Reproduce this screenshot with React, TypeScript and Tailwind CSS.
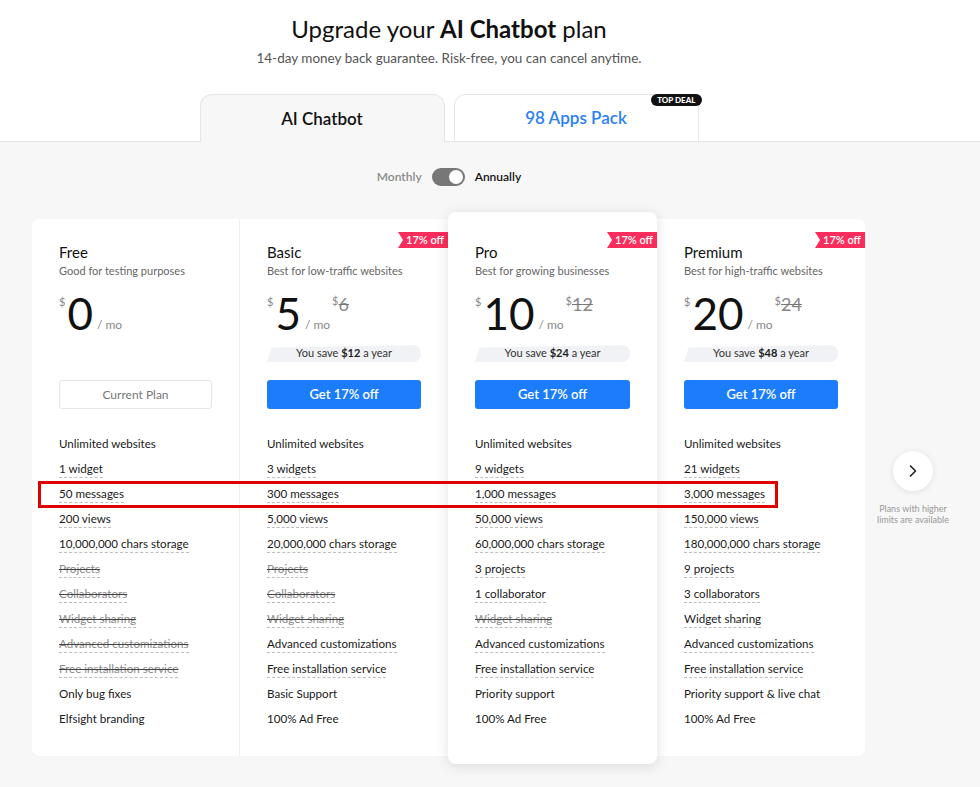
import { ChevronRight } from 'lucide-react'

// ── Data ──────────────────────────────────────────────────────────────────────

type Feature = { t: string; u?: boolean; x?: boolean }

interface Plan {
  name: string
  desc: string
  price: string
  old?: string
  save?: string
  current?: boolean
  features: Feature[]
}

const f = (t: string): Feature => ({ t })
const u = (t: string): Feature => ({ t, u: true })
const x = (t: string): Feature => ({ t, u: true, x: true })

const plans: Plan[] = [
  {
    name: 'Free',
    desc: 'Good for testing purposes',
    price: '0',
    current: true,
    features: [
      f('Unlimited websites'), u('1 widget'), u('50 messages'), u('200 views'),
      u('10,000,000 chars storage'), x('Projects'), x('Collaborators'), x('Widget sharing'),
      x('Advanced customizations'), x('Free installation service'), f('Only bug fixes'), f('Elfsight branding'),
    ],
  },
  {
    name: 'Basic',
    desc: 'Best for low-traffic websites',
    price: '5',
    old: '6',
    save: '$12',
    features: [
      f('Unlimited websites'), u('3 widgets'), u('300 messages'), u('5,000 views'),
      u('20,000,000 chars storage'), x('Projects'), x('Collaborators'), x('Widget sharing'),
      u('Advanced customizations'), u('Free installation service'), f('Basic Support'), f('100% Ad Free'),
    ],
  },
  {
    name: 'Pro',
    desc: 'Best for growing businesses',
    price: '10',
    old: '12',
    save: '$24',
    features: [
      f('Unlimited websites'), u('9 widgets'), u('1,000 messages'), u('50,000 views'),
      u('60,000,000 chars storage'), u('3 projects'), u('1 collaborator'), x('Widget sharing'),
      u('Advanced customizations'), u('Free installation service'), f('Priority support'), f('100% Ad Free'),
    ],
  },
  {
    name: 'Premium',
    desc: 'Best for high-traffic websites',
    price: '20',
    old: '24',
    save: '$48',
    features: [
      f('Unlimited websites'), u('21 widgets'), u('3,000 messages'), u('150,000 views'),
      u('180,000,000 chars storage'), u('9 projects'), u('3 collaborators'), u('Widget sharing'),
      u('Advanced customizations'), u('Free installation service'), f('Priority support & live chat'), f('100% Ad Free'),
    ],
  },
]

// ── Pieces ────────────────────────────────────────────────────────────────────

function Ribbon({ top }: { top: string }) {
  return (
    <div
      className={`absolute right-0 ${top} h-[16px] w-[50px] bg-[#fb2d5c] pl-[8px] text-[11px] font-semibold leading-[16px] text-white [clip-path:polygon(0_0,100%_0,100%_100%,0_100%,5px_50%)]`}
    >
      17% off
    </div>
  )
}

function PlanColumn({ plan, pro }: { plan: Plan; pro?: boolean }) {
  return (
    <div
      className={`relative flex flex-col px-[27px] ${
        pro
          ? 'z-[5] -mt-[7px] -mb-[8px] w-[209px] rounded-lg bg-white pt-[30px] pb-[28px] shadow-[0_2px_14px_rgba(0,0,0,0.12)]'
          : 'w-[208px] pt-[23px] pb-[20px]'
      } ${plan.current ? 'border-r border-[#efefef]' : ''}`}
    >
      {plan.old && <Ribbon top={pro ? 'top-[20px]' : 'top-[13px]'} />}

      <p className="text-[15px] leading-[20px] text-[#111]">{plan.name}</p>
      <p className="mt-[2px] text-[11px] leading-[14px] text-[#666]">{plan.desc}</p>

      {/* Price */}
      <div className="mt-[13px] flex h-[44px] items-start">
        <span className="mt-[5px] text-[11px] leading-none text-[#888]">$</span>
        <span className="ml-[2px] text-[44px] leading-none text-[#111]">{plan.price}</span>
        <span className="ml-[4px] mt-[28px] text-[12px] leading-none text-[#888]">/ mo</span>
        {plan.old && (
          <span className="ml-[2px] mt-[4px] flex items-start text-[#888]">
            <span className="text-[11px] leading-none">$</span>
            <span className="text-[18px] leading-none line-through decoration-[#777]">{plan.old}</span>
          </span>
        )}
      </div>

      {/* Savings */}
      <div className="mt-[10px] h-[17px]">
        {plan.save && (
          <div className="flex h-[17px] items-center justify-center rounded-r-lg bg-[#f1f2f5] text-[11px] text-[#333] [clip-path:polygon(3%_14%,100%_0,100%_100%,0_100%)]">
            You save&nbsp;<b className="font-bold text-[#222]">{plan.save}</b>&nbsp;a year
          </div>
        )}
      </div>

      {/* Action */}
      {plan.current ? (
        <button className="mt-[18px] h-[29px] w-full rounded-[3px] border border-[#e6e6e6] bg-white text-[12px] text-[#777]">
          Current Plan
        </button>
      ) : (
        <button className="mt-[18px] h-[29px] w-full rounded-[3px] bg-[#1c7dfc] text-[13px] font-semibold text-white">
          Get 17% off
        </button>
      )}

      {/* Features */}
      <ul className="mt-[27px] flex flex-col">
        {plan.features.map((ft) => (
          <li key={ft.t} className="flex h-[25px] items-start">
            <span
              className={`text-[11.6px] leading-[16px] ${
                ft.u ? 'border-b border-dashed border-[#bdbdbd]' : ''
              } ${ft.x ? 'text-[#8a8a8a] line-through decoration-[#444]' : 'text-[#1a1a1a]'}`}
            >
              {ft.t}
            </span>
          </li>
        ))}
      </ul>
    </div>
  )
}

// ── Page ──────────────────────────────────────────────────────────────────────

export default function App() {
  return (
    <div className="min-h-screen bg-[#f7f7f7] font-['Lato',sans-serif] text-[#111]">
      {/* Header */}
      <div className="border-b border-[#e6e6e6] bg-white">
        <div className="flex w-[898px] flex-col items-center pt-[14px]">
          <h1 className="text-[24px] leading-[30px] text-[#111]">
            Upgrade your <b className="font-bold">AI Chatbot</b> plan
          </h1>
          <p className="mt-[6px] text-[13.5px] leading-[16px] text-[#555]">
            14-day money back guarantee. Risk-free, you can cancel anytime.
          </p>

          <div className="mt-[28px] -mb-px flex gap-[9px]">
            <div className="flex h-[48px] w-[245px] items-center justify-center rounded-t-xl border border-b-0 border-[#e6e6e6] bg-[#f7f7f7] text-[17px] font-semibold text-[#111]">
              AI Chatbot
            </div>
            <div className="relative flex h-[47px] w-[245px] items-center justify-center rounded-t-xl border border-b-0 border-[#e6e6e6] bg-white text-[17px] font-semibold text-[#2a7ff5]">
              98 Apps Pack
              <span className="absolute -right-[4px] -top-[1px] rounded-full bg-[#111] px-[6px] text-[8px] font-black leading-[12px] text-white">
                TOP DEAL
              </span>
            </div>
          </div>
        </div>
      </div>

      {/* Billing toggle */}
      <div className="flex w-[898px] items-center justify-center gap-[10px] pt-[26px]">
        <span className="text-[12px] font-semibold text-[#8a8a8a]">Monthly</span>
        <span className="flex h-[18px] w-[33px] items-center justify-end rounded-full bg-[#777] px-[2px]">
          <span className="h-[14px] w-[14px] rounded-full bg-white" />
        </span>
        <span className="text-[12px] font-semibold text-[#111]">Annually</span>
      </div>

      {/* Plans */}
      <div className="mt-[33px] flex items-center pb-[30px] pl-[32px]">
        <div className="relative flex w-[833px] rounded-lg bg-white">
          {plans.map((p) => (
            <PlanColumn key={p.name} plan={p} pro={p.name === 'Pro'} />
          ))}
          <div className="absolute left-[6px] top-[262px] z-10 h-[27px] w-[740px] border-[3px] border-[#e00000]" />
        </div>

        <div className="ml-[8px] flex w-[80px] flex-col items-center">
          <button className="flex h-[40px] w-[40px] items-center justify-center rounded-full bg-white shadow-[0_1px_6px_rgba(0,0,0,0.1)]">
            <ChevronRight className="h-5 w-5 text-[#222]" strokeWidth={2} />
          </button>
          <p className="mt-[12px] text-center text-[9px] leading-[11px] text-[#999]">
            Plans with higher
            <br />
            limits are available
          </p>
        </div>
      </div>
    </div>
  )
}
